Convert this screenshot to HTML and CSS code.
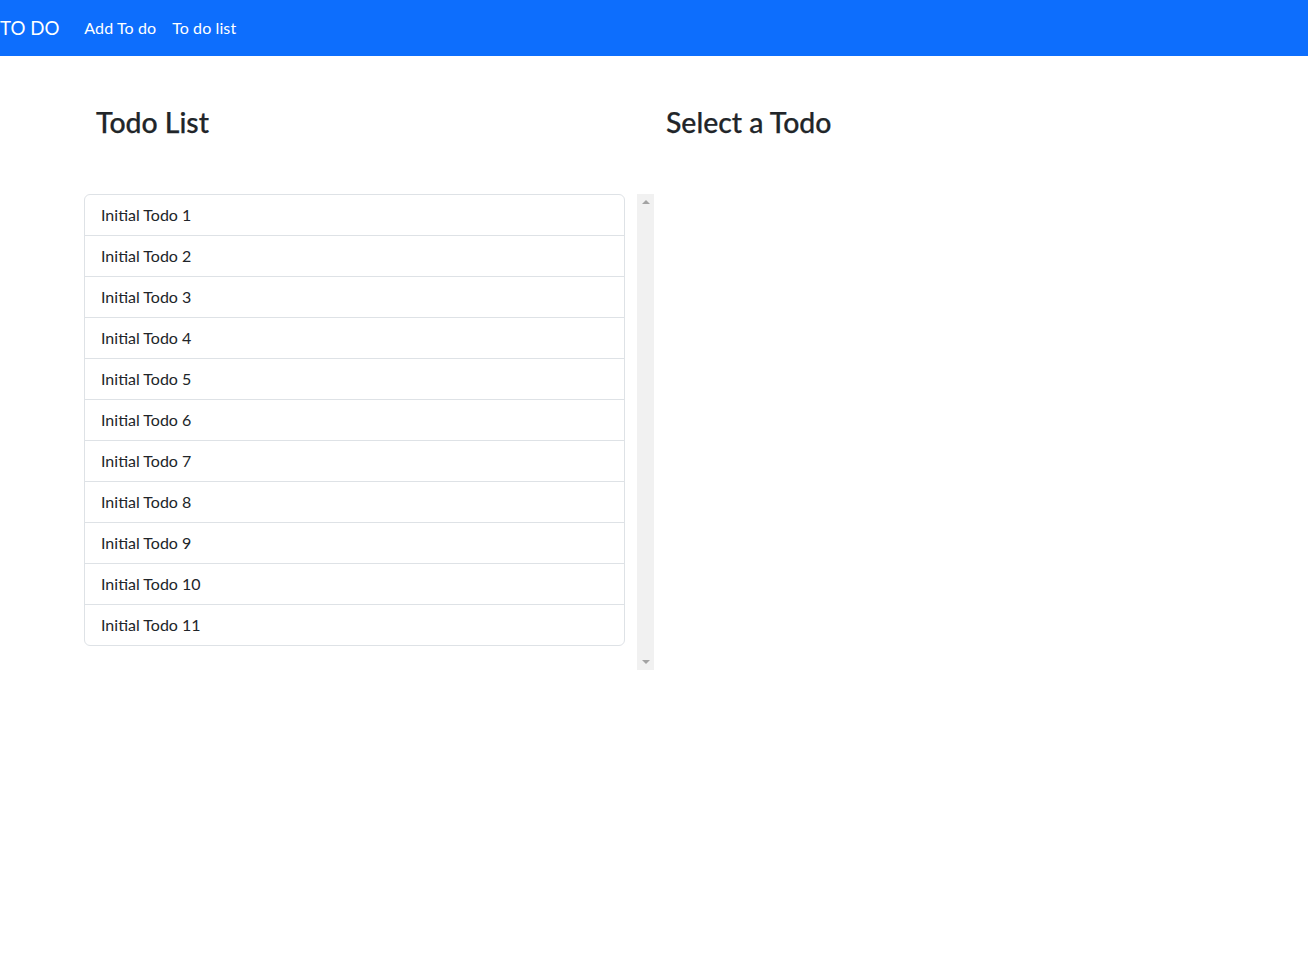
FILE: index.html
```html
<!DOCTYPE html>
<html lang="en">
<head>
<meta charset="utf-8">
<title>TO DO</title>
<link rel="stylesheet" href="styles.css">
</head>
<body>
<nav class="navbar">
  <a class="brand" href="#">TO DO</a>
  <a class="nav-link" href="#">Add To do</a>
  <a class="nav-link" href="#">To do list</a>
</nav>
<main class="columns">
  <section class="col col-left">
    <h3 class="title">Todo List</h3>
    <div class="list-wrap">
      <ul class="list-group">
        <li class="item">Initial Todo 1</li>
        <li class="item">Initial Todo 2</li>
        <li class="item">Initial Todo 3</li>
        <li class="item">Initial Todo 4</li>
        <li class="item">Initial Todo 5</li>
        <li class="item">Initial Todo 6</li>
        <li class="item">Initial Todo 7</li>
        <li class="item">Initial Todo 8</li>
        <li class="item">Initial Todo 9</li>
        <li class="item">Initial Todo 10</li>
        <li class="item">Initial Todo 11</li>
      </ul>
      <div class="scrollbar">
        <span class="arrow arrow-up"></span>
        <span class="arrow arrow-down"></span>
      </div>
    </div>
  </section>
  <section class="col col-right">
    <h3 class="title">Select a Todo</h3>
  </section>
</main>
</body>
</html>
```
FILE: styles.css
```css
* { box-sizing: border-box; }
html, body { margin: 0; padding: 0; }
body {
  font-family: Lato, "Noto Sans", sans-serif;
  font-size: 16px;
  line-height: 1.5;
  color: #212529;
  background: #fff;
}
.navbar {
  height: 56px;
  background: #0d6efd;
  display: flex;
  align-items: center;
}
.brand {
  color: #fff;
  text-decoration: none;
  font-size: 18.7px;
  margin-right: 17px;
  line-height: 30px;
}
.nav-link {
  color: #fff;
  text-decoration: none;
  font-size: 16px;
  padding: 8px;
  letter-spacing: 0.1px;
}
.columns {
  width: 1140px;
  margin: 0 auto;
  display: flex;
}
.col { width: 570px; }
.col-left { display: flex; flex-direction: column; }
.col-right { padding-left: 12px; }
.title {
  font-size: 28.4px;
  font-weight: 500;
  line-height: 1.2;
  margin: 49px 0 0 0;
  -webkit-text-stroke: 0.25px #212529;
}
.col-left .title { padding-left: 12px; margin-bottom: 55px; }
.list-wrap {
  display: flex;
  gap: 12px;
  height: 476px;
}
.list-group {
  list-style: none;
  margin: 0;
  padding: 0;
  width: 541px;
  align-self: flex-start;
  border: 1px solid #dee2e6;
  border-radius: 6px;
}
.item {
  padding: 8px 16px;
  line-height: 24px;
  border-bottom: 1px solid #dee2e6;
}
.item:last-child { border-bottom: 0; }
.scrollbar {
  width: 17px;
  background: #f1f1f1;
  display: flex;
  flex-direction: column;
  justify-content: space-between;
  align-items: center;
  padding: 6px 0;
}
.arrow {
  width: 0; height: 0;
  border-left: 4px solid transparent;
  border-right: 4px solid transparent;
}
.arrow-up { border-bottom: 4px solid #a3a3a3; }
.arrow-down { border-top: 4px solid #a3a3a3; }
```
